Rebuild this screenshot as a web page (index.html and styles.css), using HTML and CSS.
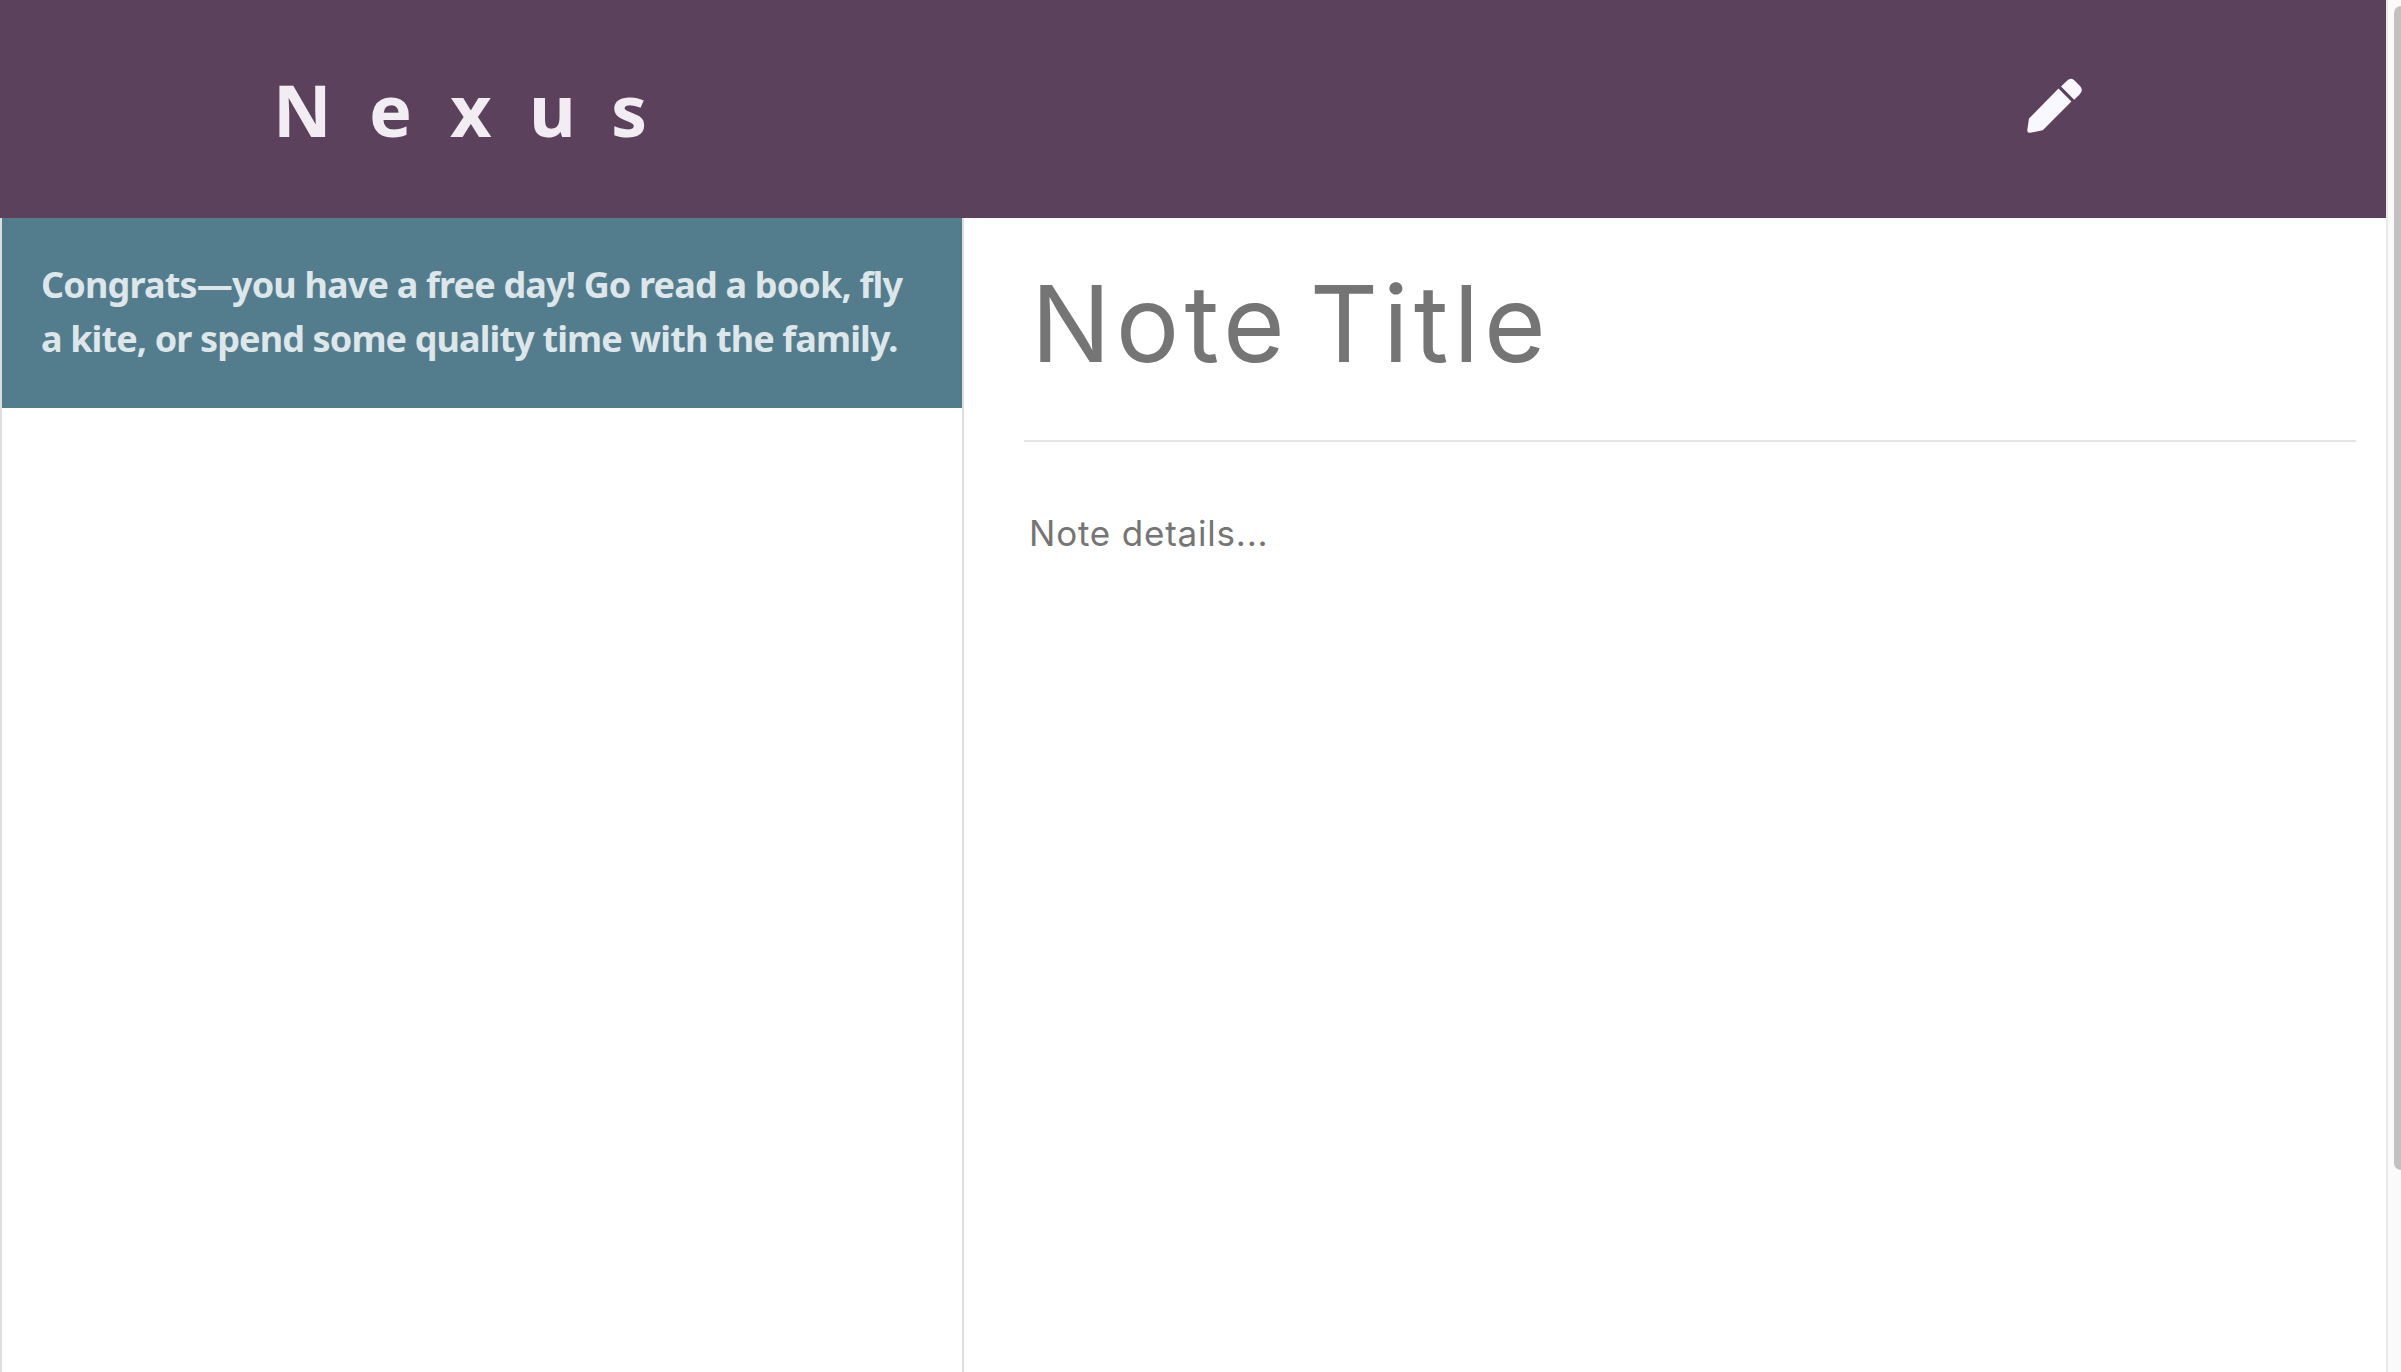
FILE: index.html
```html
<!DOCTYPE html>
<html lang="en">
<head>
<meta charset="utf-8">
<title>Nexus</title>
<link rel="stylesheet" href="styles.css">
</head>
<body>
<div class="app">
  <header class="header">
    <div class="logo"><span>N</span><span>e</span><span>x</span><span>u</span><span>s</span></div>
    <svg class="pencil" viewBox="0 0 56 56" aria-label="New note">
      <path d="M31.5 10.5 44.4 23.5 16.5 51.5 15.5 52.3 3.5 54.7Q0 55.3.3 52L2 40.5Z"/>
      <path d="M34 8.5 39.5 3.2Q43-1.2 47 2L53 8Q56.7 12 52.8 16.2L47.2 21.8Z"/>
    </svg>
  </header>
  <main class="main">
    <aside class="sidebar">
      <div class="notice"><span class="line first">Congrats—you have a free day! Go read a book, fly</span> <span class="line second">a kite, or spend some quality time with the family.</span></div>
    </aside>
    <section class="note">
      <div class="title">Note Title</div>
      <div class="details">Note details...</div>
    </section>
  </main>
</div>
<div class="scrollbar"><div class="thumb"></div></div>
</body>
</html>
```
FILE: styles.css
```css
* { box-sizing: border-box; }
body { margin: 0; display: flex; height: 1372px; overflow: hidden; background: #fff; }
.app { width: 2386px; display: flex; flex-direction: column; }
.header { height: 218px; background: #5c415d; display: flex; justify-content: space-between; align-items: flex-start; padding: 0 303px 0 273px; }
.logo { display: grid; grid-template-columns: 96px 81px 79px 82px 40px; padding-top: 59px; font: bold 72px/100px "Noto Sans", sans-serif; color: #f2edf2; }
.pencil { width: 56px; height: 56px; margin-top: 78px; fill: #f9f8ff; }
.main { flex: 1; display: flex; }
.sidebar { width: 964px; border: solid #dedede; border-width: 0 2px; }
.notice { height: 190px; padding: 40px 39px; background: #537d8d; color: #dde6e9; font: bold 36px/54px "Noto Sans", sans-serif; }
.line { display: block; white-space: nowrap; }
.first { letter-spacing: -0.83px; }
.second { letter-spacing: -0.88px; }
.note { flex: 1; padding: 0 30px 0 60px; color: #757575; font-family: Inter, sans-serif; }
.title { height: 224px; padding: 39px 0 0 7px; border-bottom: 2px solid #e5e5e5; font-size: 106px; line-height: 133px; letter-spacing: 5px; word-spacing: -15px; }
.details { padding: 66px 0 0 5px; font-size: 35px; line-height: 50px; letter-spacing: 0.8px; }
.scrollbar { width: 15px; background: #fafafa; border-left: 2px solid #e8e8e8; padding: 6px 0 0 6px; }
.thumb { height: 1164px; background: #c1c1c1; border-radius: 8px 0 0 8px; }
```
